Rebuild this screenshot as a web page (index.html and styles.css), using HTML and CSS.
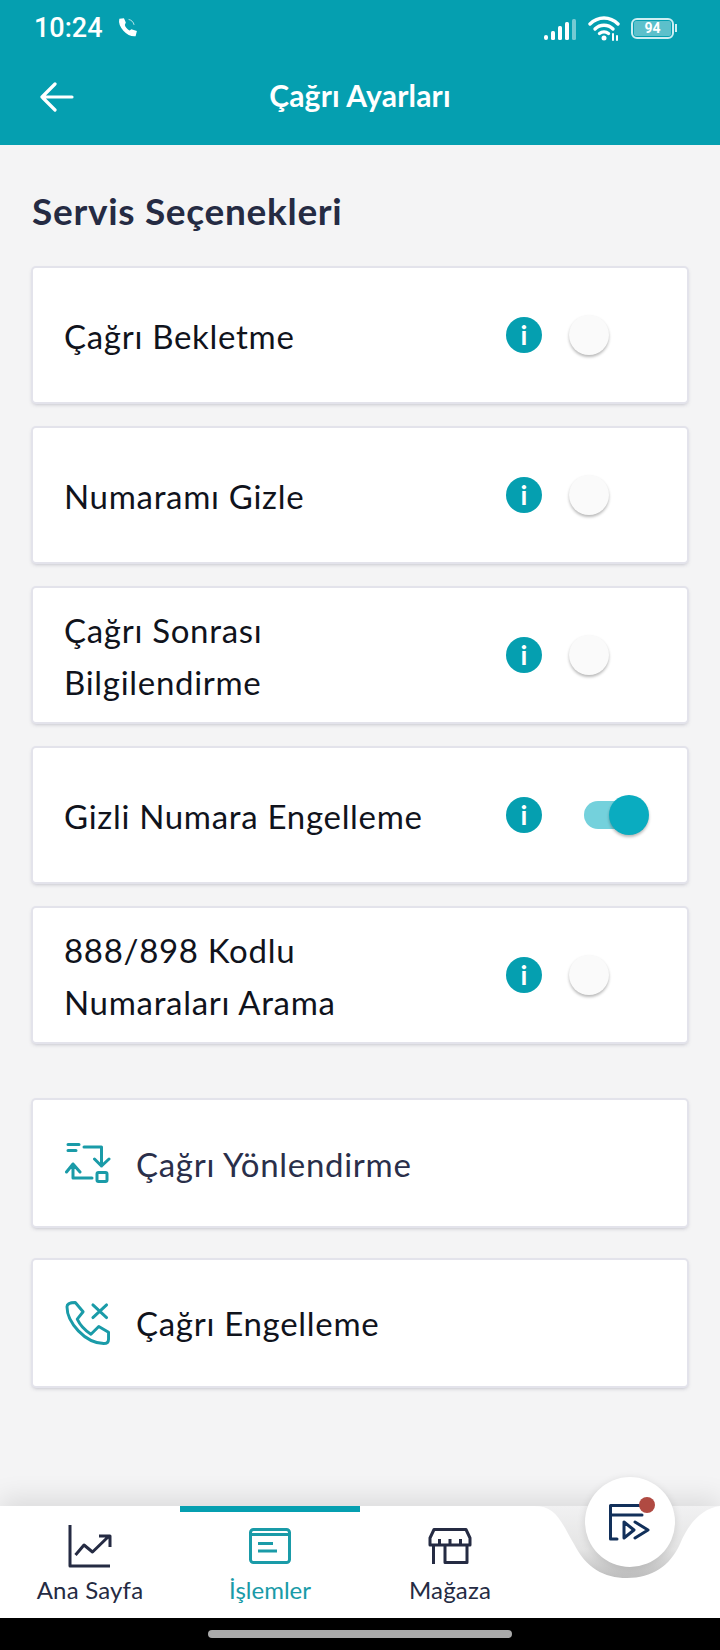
FILE: index.html
```html
<!DOCTYPE html>
<html lang="tr">
<head>
    <meta charset="UTF-8">
    <meta name="viewport" content="width=device-width, initial-scale=1.0">
    <title>Çağrı Ayarları</title>
    <link rel="stylesheet" href="styles.css">
</head>
<body>
    <header class="top">
        <div class="status-bar">
            <span class="time">10:24</span>
            <svg class="call-icon" viewBox="0 0 21 21" fill="none" stroke="#fff" stroke-width="3" stroke-linecap="round">
                <path d="M3 2.500C1.500 9 10 19 18 18.500L19 14.500 14.500 13 12.500 14.500C10 13 7.500 10 7 8L8 5.500 6.500 2Z" fill="#fff" stroke-width="1.500"/>
                <path d="M12 2.500C14.500 3 16.500 5 17 7.500" stroke-width="1" opacity=".7"/>
            </svg>
            <span class="status-space"></span>
            <svg class="signal-icon" viewBox="0 0 32 21">
                <rect x="0" y="16" width="4" height="5" rx="2" fill="#fff"/>
                <rect x="7" y="12" width="4" height="9" rx="1.500" fill="#fff"/>
                <rect x="14" y="7" width="4" height="14" rx="1.500" fill="#fff"/>
                <rect x="21" y="3" width="4" height="18" rx="1.500" fill="#fff"/>
                <rect x="28" y="0" width="4" height="21" rx="1.500" fill="#fff" opacity=".45"/>
            </svg>
            <svg class="wifi-icon" viewBox="0 0 32 25" fill="none" stroke="#fff" stroke-width="3.400" stroke-linecap="round">
                <path d="M2 8C10 0 22 0 30 8"/>
                <path d="M7 13C12 8 20 8 25 13"/>
                <path d="M11.500 17.500C14 15.500 18 15.500 20.500 17.500"/>
                <circle cx="16" cy="22" r="2.500" fill="#fff" stroke="none"/>
                <path d="M25 18V24M29 20V24" stroke-width="2"/>
            </svg>
            <div class="battery"><span class="battery-num">94</span></div>
            <span class="battery-tip"></span>
        </div>
        <div class="app-bar">
            <svg class="back-icon" viewBox="0 0 34 30" fill="none" stroke="#fff" stroke-width="3.200" stroke-linecap="round" stroke-linejoin="round">
                <path d="M32 15H2M15 2L2 15L15 28"/>
            </svg>
            <h1 class="page-title">Çağrı Ayarları</h1>
            <span></span>
        </div>
    </header>

    <main class="content">
        <h2 class="section-title">Servis Seçenekleri</h2>

        <div class="card">
            <div class="card-text">Çağrı Bekletme</div>
            <div class="info">i</div>
            <div class="switch"><span class="knob"></span></div>
        </div>
        <div class="card">
            <div class="card-text">Numaramı Gizle</div>
            <div class="info">i</div>
            <div class="switch"><span class="knob"></span></div>
        </div>
        <div class="card">
            <div class="card-text">Çağrı Sonrası<br>Bilgilendirme</div>
            <div class="info">i</div>
            <div class="switch"><span class="knob"></span></div>
        </div>
        <div class="card">
            <div class="card-text">Gizli Numara Engelleme</div>
            <div class="info">i</div>
            <div class="switch on"><span class="knob"></span></div>
        </div>
        <div class="card">
            <div class="card-text">888/898 Kodlu<br>Numaraları Arama</div>
            <div class="info">i</div>
            <div class="switch"><span class="knob"></span></div>
        </div>

        <div class="card link-card first-link">
            <svg class="link-icon" viewBox="0 0 46 40" fill="none" stroke="#1a9ba8" stroke-width="3" stroke-linecap="round" stroke-linejoin="round">
                <path d="M3 1.500H14M3 7.500H11M19 4H36.500V23M29.500 16L36.500 23L44 16M1.500 29L8 21L15 29M8 21V35H27"/>
                <rect x="32" y="29.500" width="10" height="9" rx="1.500"/>
            </svg>
            <div class="card-text dark">Çağrı Yönlendirme</div>
        </div>
        <div class="card link-card">
            <svg class="link-icon" viewBox="0 0 46 45" fill="none" stroke="#1a9ba8" stroke-width="3" stroke-linecap="round" stroke-linejoin="round">
                <path d="M1.500 6C1.500 3 4 1.500 10 1.500L18 11L12 18.500C15 25 20 30 26 34L34 26L44 32V39C44 42 42 43.500 39 43.500C20 43 1.500 22 1.500 6Z"/>
                <path d="M28 4L42 17M42 4L28 17"/>
            </svg>
            <div class="card-text">Çağrı Engelleme</div>
        </div>
    </main>

    <nav class="bottom-nav">
        <a class="tab">
            <svg class="tab-icon" viewBox="0 0 46 46" fill="none" stroke="#252b43" stroke-width="3" stroke-linejoin="round">
                <path d="M3 2V43H43"/>
                <path d="M8.500 32L17 22L25.500 29L41 14M32 13H43V24"/>
            </svg>
            <span>Ana Sayfa</span>
        </a>
        <a class="tab active">
            <svg class="tab-icon" viewBox="-2 -5 46 46" fill="none" stroke="#1a9ba8" stroke-width="3" stroke-linejoin="round">
                <rect x="1.500" y="1.500" width="39" height="33" rx="3"/>
                <path d="M1.500 6.500H40.500M9 15.500H24M9 23H28"/>
            </svg>
            <span>İşlemler</span>
        </a>
        <a class="tab">
            <svg class="tab-icon" viewBox="-2 -5 46 46" fill="none" stroke="#252b43" stroke-width="3" stroke-linejoin="round">
                <path d="M5 1.500H37L41 10V17H1V10ZM10.500 11V17M21 11V17M31.500 11V17M4.500 18V36M16 18V34.500H38V18"/>
            </svg>
            <span>Mağaza</span>
        </a>
        <svg class="notch" viewBox="0 0 186 76" preserveAspectRatio="none">
            <defs>
                <linearGradient id="notch-fill" x1="0" y1="0" x2="0" y2="1">
                    <stop offset="0" stop-color="#f1f1f2"/>
                    <stop offset=".6" stop-color="#e4e4e4"/>
                    <stop offset="1" stop-color="#bdbdbd"/>
                </linearGradient>
            </defs>
            <path d="M0 0C22 0 26 14 40 38C52 62 70 72 93 72C118 72 136 60 146 38C154 18 168 2 186 0Z" fill="url(#notch-fill)"/>
        </svg>
        <div class="fab">
            <svg class="fab-icon" viewBox="0 0 42 38" fill="none" stroke="#12305a" stroke-width="3" stroke-linecap="round" stroke-linejoin="round">
                <path d="M33 1.500H1.500V35H8M1.500 11H33"/>
                <path d="M15 18V34L25 26ZM26 18L39 26L26 34"/>
            </svg>
            <span class="fab-dot"></span>
        </div>
    </nav>

    <div class="home-area"><span class="home-bar"></span></div>
</body>
</html>
```
FILE: styles.css
```css
* { box-sizing: border-box; }
body { margin: 0; width: 720px; height: 1650px; display: flex; flex-direction: column; font-family: "Lato", "Noto Sans", sans-serif; background: #f4f4f5; color: #10131c; overflow: hidden; }

.top { height: 145px; background: #059fb0; color: #fff; flex: none; }
.status-bar { height: 56px; display: flex; align-items: center; padding: 0 43px 0 34px; }
.time { font-family: Roboto, sans-serif; font-size: 27px; font-weight: 500; width: 83px; }
.call-icon { width: 21px; height: 21px; margin-bottom: 2px; }
.status-space { flex: 1; }
.signal-icon { width: 32px; height: 21px; margin-right: 12px; margin-top: 2px; }
.wifi-icon { width: 32px; height: 25px; margin-right: 11px; }
.battery { width: 43px; height: 21px; border: 2px solid #cdeef2; border-radius: 6px; padding: 1px; display: flex; }
.battery-num { flex: 1; background: rgba(255,255,255,.35); border-radius: 2px; font-family: Roboto, sans-serif; font-weight: 700; font-size: 14px; line-height: 15px; text-align: center; }
.battery-tip { width: 2px; height: 8px; background: #cdeef2; margin-left: 1px; }
.app-bar { height: 82px; display: grid; grid-template-columns: 40px 1fr 40px; align-items: center; padding: 0 40px; }
.back-icon { width: 34px; height: 30px; }
.page-title { margin: 0; font-size: 30px; font-weight: 700; letter-spacing: .2px; text-align: center; padding-bottom: 4px; }

.content { flex: 1; padding: 40px 33px 0 33px; }
.section-title { margin: 0 0 31px -1px; height: 52px; line-height: 52px; font-size: 37px; font-weight: 700; letter-spacing: .7px; color: #252b43; }

.card { width: 654px; height: 134px; margin-bottom: 26px; padding: 0 38px 0 31px; display: flex; align-items: center; background: #fff; border-radius: 3px; box-shadow: 0 0 0 2px #e3e3eb, 0 2px 4px rgba(50,50,80,.35); }
.card-text { flex: 1; padding-top: 2px; font-size: 33px; letter-spacing: .7px; line-height: 52px; color: #10131c; }
.card-text.dark { color: #2a2f4a; }
.info { width: 36px; height: 36px; margin-right: 27px; border-radius: 50%; background: #059fb0; color: #fff; font-size: 27px; font-weight: 700; line-height: 36px; text-align: center; }
.switch { position: relative; width: 80px; height: 40px; }
.knob { position: absolute; left: 0; top: 0; width: 40px; height: 40px; border-radius: 50%; background: #fafafa; box-shadow: 0 2px 3px rgba(0,0,0,.28); }
.switch.on::before { content: ""; position: absolute; left: 15px; top: 6px; width: 56px; height: 28px; border-radius: 14px; background: #74d1dc; }
.switch.on .knob { left: 40px; background: #0aacc0; }

.link-card { height: 126px; margin-bottom: 34px; padding-right: 32px; padding-left: 32px; }
.link-card + .link-card .card-text { padding-top: 0; }
.first-link { margin-top: 58px; }
.link-icon { width: 46px; height: 44px; margin-right: 25px; flex: none; }

.bottom-nav { position: relative; height: 112px; flex: none; display: flex; background: #fff; box-shadow: 0 -8px 24px rgba(0,0,0,.1); }
.tab { width: 180px; padding-top: 17px; display: flex; flex-direction: column; align-items: center; font-size: 24px; letter-spacing: .2px; color: #252b43; }
.tab span { margin-top: 6px; line-height: 30px; }
.tab.active { color: #1a9ba8; border-top: 6px solid #059fb0; padding-top: 11px; letter-spacing: 0; }
.tab-icon { width: 46px; height: 46px; }
.notch { position: absolute; left: 534px; top: 0; width: 186px; height: 76px; }
.fab { position: absolute; left: 585px; top: -29px; width: 90px; height: 90px; border-radius: 50%; background: #fff; display: flex; align-items: center; justify-content: center; box-shadow: 0 2px 8px rgba(0,0,0,.12); }
.fab-icon { width: 42px; height: 38px; margin-top: 2px; }
.fab-dot { position: absolute; left: 54px; top: 20px; width: 16px; height: 16px; border-radius: 50%; background: #b04a42; }

.home-area { height: 32px; flex: none; background: #000; display: flex; justify-content: center; align-items: center; }
.home-bar { width: 304px; height: 8px; border-radius: 4px; background: #aaa; }
```
